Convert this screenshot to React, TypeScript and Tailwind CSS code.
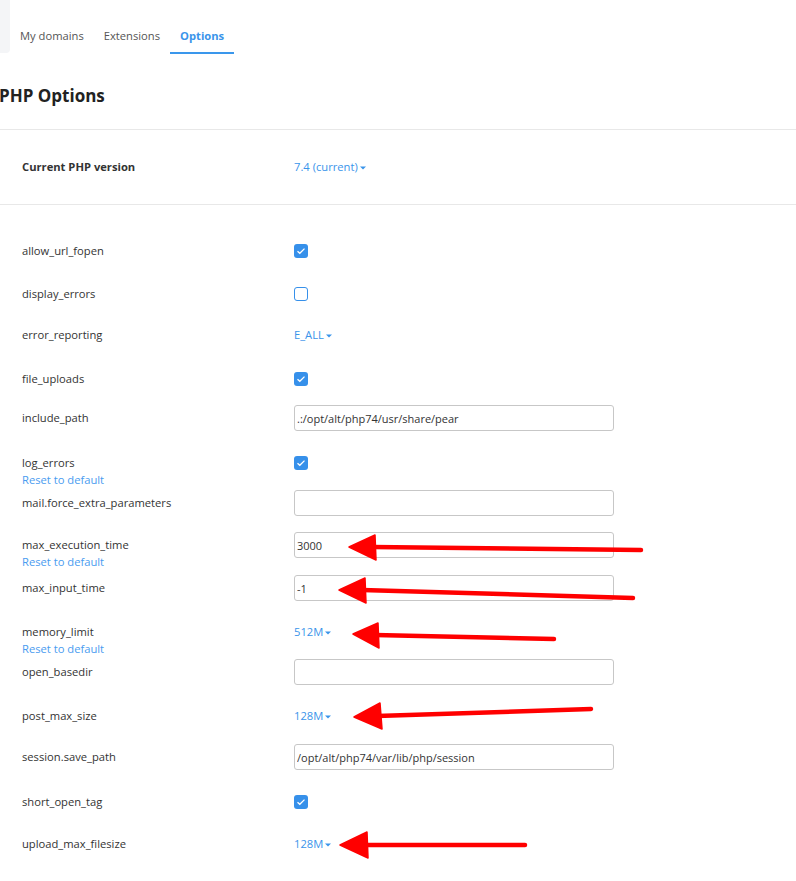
import { ChangeEvent, useState } from "react";

type Option = {
  name: string;
  kind: "checkbox" | "select" | "input";
  value?: string;
  checked?: boolean;
  modified?: boolean;
  height: string;
};

const options: Option[] = [
  { name: "allow_url_fopen", kind: "checkbox", checked: true, height: "h-[43px]" },
  { name: "display_errors", kind: "checkbox", checked: false, height: "h-[41px]" },
  { name: "error_reporting", kind: "select", value: "E_ALL", height: "h-[44px]" },
  { name: "file_uploads", kind: "checkbox", checked: true, height: "h-[39px]" },
  { name: "include_path", kind: "input", value: ".:/opt/alt/php74/usr/share/pear", height: "h-[45px]" },
  { name: "log_errors", kind: "checkbox", checked: true, modified: true, height: "h-[40px]" },
  { name: "mail.force_extra_parameters", kind: "input", value: "", height: "h-[42px]" },
  { name: "max_execution_time", kind: "input", value: "3000", modified: true, height: "h-[43px]" },
  { name: "max_input_time", kind: "input", value: "-1", height: "h-[44px]" },
  { name: "memory_limit", kind: "select", value: "512M", modified: true, height: "h-[40px]" },
  { name: "open_basedir", kind: "input", value: "", height: "h-[44px]" },
  { name: "post_max_size", kind: "select", value: "128M", height: "h-[41px]" },
  { name: "session.save_path", kind: "input", value: "/opt/alt/php74/var/lib/php/session", height: "h-[45px]" },
  { name: "short_open_tag", kind: "checkbox", checked: true, height: "h-[42px]" },
  { name: "upload_max_filesize", kind: "select", value: "128M", height: "h-[40px]" },
];

const Caret = () => (
  <svg width="6" height="4" viewBox="0 0 6 4" className="ml-[2px] mt-[1px]">
    <path d="M0 0.5 L6 0.5 L3 3.5 Z" fill="#3a94ea" />
  </svg>
);

const Dropdown = ({ value }: { value: string }) => (
  <button className="flex items-center text-[11.2px] leading-[16px] text-[#3a94ea]">
    {value}
    <Caret />
  </button>
);

const Checkbox = ({ initial }: { initial: boolean }) => {
  const [checked, setChecked] = useState(initial);
  return (
    <button
      onClick={() => setChecked(!checked)}
      className={
        checked
          ? "flex h-[14px] w-[14px] items-center justify-center rounded-[3px] bg-[#3690ea]"
          : "h-[14px] w-[14px] rounded-[3px] border-[1.5px] border-[#3690ea] bg-white"
      }
    >
      {checked && (
        <svg width="10" height="8" viewBox="0 0 10 8">
          <path d="M1.5 4.2 L3.8 6.3 L8.5 1.6" stroke="white" strokeWidth="1.3" fill="none" />
        </svg>
      )}
    </button>
  );
};

const TextField = ({ initial }: { initial: string }) => {
  const [value, setValue] = useState(initial);
  return (
    <input
      value={value}
      onChange={(e: ChangeEvent<HTMLInputElement>) => setValue(e.target.value)}
      className="h-[26px] w-[320px] rounded-[3px] border border-[#c7c7c7] bg-white px-[2px] text-[11px] text-[#333] outline-none"
    />
  );
};

const OptionRow = ({ option }: { option: Option }) => (
  <div className={`flex items-start ${option.height}`}>
    <div className="w-[294px] shrink-0 pl-[22px]">
      <div className="flex h-[26px] items-center text-[11.2px] text-[#333]">{option.name}</div>
      {option.modified && (
        <a className="-mt-[4px] block text-[11.2px] leading-[16px] text-[#4a9cf0]">Reset to default</a>
      )}
    </div>
    <div className="flex h-[26px] items-center">
      {option.kind === "checkbox" && <Checkbox initial={!!option.checked} />}
      {option.kind === "select" && <Dropdown value={option.value || ""} />}
      {option.kind === "input" && <TextField initial={option.value || ""} />}
    </div>
  </div>
);

// red annotation arrows drawn over the screenshot
const arrows = [
  { head: "349,547 375,535 376,560", from: "372,547", to: "641,550" },
  { head: "339,590 365,578 366,603", from: "362,590", to: "633,598" },
  { head: "353,634 378,623 379,648", from: "375,635", to: "554,639" },
  { head: "354,717 380,703 382,729", from: "377,716", to: "591,709" },
  { head: "340,845 367,832 368,858", from: "364,845", to: "525,845" },
];

const Annotations = () => (
  <svg className="pointer-events-none absolute inset-0" width="796" height="881">
    {arrows.map((a) => {
      const [x1, y1] = a.from.split(",").map(Number);
      const [x2, y2] = a.to.split(",").map(Number);
      return (
        <g key={a.head}>
          <polygon points={a.head} fill="#ff0000" stroke="#ff0000" strokeWidth="1.5" strokeLinejoin="round" />
          <line x1={x1} y1={y1} x2={x2} y2={y2} stroke="#ff0000" strokeWidth="4.5" strokeLinecap="round" />
        </g>
      );
    })}
  </svg>
);

export default function App() {
  const tabs = ["My domains", "Extensions", "Options"];

  return (
    <div className="relative h-[881px] w-[796px] overflow-hidden bg-white font-['Open_Sans',sans-serif]">
      {/* Tabs */}
      <div className="flex h-[54px]">
        <div className="h-[53px] w-[10px] rounded-br-[4px] bg-[#f4f5f7]" />
        {tabs.map((tab) => (
          <div
            key={tab}
            className={
              tab === "Options"
                ? "flex h-[54px] items-end border-b-2 border-[#3a97ec] px-[10px] pb-[8px] text-[11.2px] font-bold leading-[16px] text-[#3a94ea]"
                : "flex h-[54px] items-end px-[10px] pb-[10px] text-[11.2px] leading-[16px] text-[#555]"
            }
          >
            {tab}
          </div>
        ))}
      </div>

      {/* Heading */}
      <h1 className="mt-[30px] mb-[21px] -ml-[1px] text-[17px] font-bold leading-[24px] text-[#222]">PHP Options</h1>

      <div className="border-t border-[#e8e8e8]" />
      <div className="flex h-[74px] items-center">
        <div className="w-[294px] shrink-0 pl-[22px] text-[11.2px] font-bold text-[#333]">Current PHP version</div>
        <Dropdown value="7.4 (current)" />
      </div>
      <div className="border-t border-[#e8e8e8]" />

      {/* Options list */}
      <div className="pt-[33px]">
        {options.map((option) => (
          <OptionRow key={option.name} option={option} />
        ))}
      </div>

      <Annotations />
    </div>
  );
}
